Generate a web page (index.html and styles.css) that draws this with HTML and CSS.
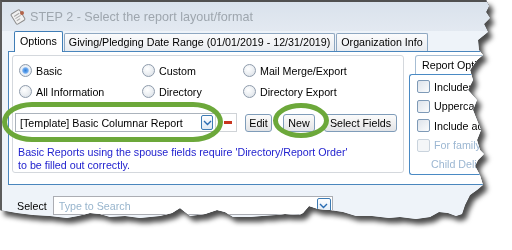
FILE: index.html
```html
<!DOCTYPE html>
<html lang="en-US">
<head>
  <meta charset="utf-8">
  <title>STEP 2 - Select the report layout/format</title>
  <link rel="stylesheet" href="styles.css">
</head>
<body>
  <div class="stage">
    <div class="torn">
      <div class="window">
        <div class="titlebar">
          <svg class="app-icon" width="16" height="16" viewBox="0 0 16 16">
            <g transform="rotate(-32 8 8)">
              <rect x="3" y="2" width="10" height="12" rx="1.5" fill="#f1f1f1" stroke="#8c8c8c"/>
              <path d="M5 5.5h6M5 8h6M5 10.5h4" stroke="#a8a8a8"/>
            </g>
            <circle cx="12" cy="4" r="2" fill="#b3644a"/>
          </svg>
          <span class="title">STEP 2 - Select the report layout/format</span>
        </div>

        <div class="client">
          <div class="tabs">
            <div class="tab active">Options</div>
            <div class="tab">Giving/Pledging Date Range (01/01/2019 - 12/31/2019)</div>
            <div class="tab">Organization Info</div>
          </div>

          <div class="tabpanel">
            <div class="group">
              <div class="radios">
                <label class="radio checked"><span class="circle"></span>Basic</label>
                <label class="radio"><span class="circle"></span>Custom</label>
                <label class="radio"><span class="circle"></span>Mail Merge/Export</label>
                <label class="radio"><span class="circle"></span>All Information</label>
                <label class="radio"><span class="circle"></span>Directory</label>
                <label class="radio"><span class="circle"></span>Directory Export</label>
              </div>

              <div class="layout-row">
                <div class="combo">
                  <span class="combo-text">[Template] Basic Columnar Report</span>
                  <span class="dd-btn">
                    <svg width="9" height="6" viewBox="0 0 9 6"><polyline points="1,1 4.5,4.5 8,1" fill="none" stroke="#2a6cb2" stroke-width="1.4"/></svg>
                  </span>
                </div>
                <div class="minus"><span></span></div>
                <button class="btn btn-edit">Edit</button>
                <button class="btn btn-new">New</button>
                <button class="btn btn-fields">Select Fields</button>
              </div>

              <p class="note">Basic Reports using the spouse fields require 'Directory/Report Order'<br>to be filled out correctly.</p>
            </div>

            <div class="report-opts">
              <div class="ro-tab">Report Options</div>
              <div class="ro-box">
                <label class="check"><span class="box"></span>Includes Inactive</label>
                <label class="check"><span class="box"></span>Uppercase</label>
                <label class="check"><span class="box"></span>Include address</label>
                <label class="check disabled"><span class="box"></span>For family</label>
                <div class="ro-sub disabled">Child Delimiter</div>
              </div>
            </div>
          </div>

          <div class="select-row">
            <span class="select-label">Select</span>
            <div class="search">
              <span class="placeholder">Type to Search</span>
              <span class="dd-btn">
                <svg width="9" height="6" viewBox="0 0 9 6"><polyline points="1,1 4.5,4.5 8,1" fill="none" stroke="#2a6cb2" stroke-width="1.4"/></svg>
              </span>
            </div>
          </div>
        </div>
      </div>
    </div>

    <div class="ring ring-combo"></div>
    <div class="ring ring-new"></div>
  </div>
</body>
</html>
```

FILE: styles.css
```css
body {
  margin: 0;
  background: #fff;
  font-family: "Liberation Sans", Arial, sans-serif;
  font-size: 10.7px;
  color: #000;
}

.stage {
  position: relative;
  width: 512px;
  height: 250px;
  overflow: hidden;
}

.torn {
  width: 500px;
  height: 226px;
  filter: drop-shadow(0 0 0.6px #000) drop-shadow(4px 5px 2.5px rgba(0, 0, 0, .7));
}

.window {
  box-sizing: border-box;
  height: 100%;
  display: flex;
  flex-direction: column;
  background: #edf2f8;
  border-top: 2px solid #505050;
  border-left: 2px solid #5c5c5c;
  clip-path: polygon(0 0, 486px 0, 489px 6px, 486px 12px, 490px 18px, 484px 24px, 488px 32px, 478px 40px,
    479px 50px, 483px 55px, 477px 60px, 470px 70px, 473px 80px, 468px 90px, 477px 100px, 473px 110px,
    477px 120px, 481px 130px, 477px 140px, 480px 150px, 484px 154px, 478px 160px, 475px 166px,
    480px 175px, 483px 185px, 477px 190px, 470px 195px, 465px 205px, 462px 214px, 456px 216px,
    448px 213px, 439px 212px, 430px 217px, 416px 219px, 400px 217px, 389px 218px, 372px 216px,
    356px 216px, 343px 212px, 330px 210px, 318px 209px, 309px 206px, 303px 213px, 299px 215px,
    285px 214px, 276px 215px, 262px 216px, 250px 217px, 233px 217px, 225px 212px, 217px 210px,
    205px 214px, 190px 216px, 185px 212px, 180px 208px, 172px 213px, 160px 216px, 140px 218px,
    125px 216px, 110px 217px, 100px 214px, 90px 213px, 78px 216px, 67px 218px, 50px 216px,
    33px 215px, 17px 213px, 0 210px);
}

/* title bar */
.titlebar {
  height: 29px;
  flex: none;
  display: flex;
  align-items: center;
  gap: 4px;
  padding-left: 8px;
  background: linear-gradient(#d9e2ec, #e3e9f1);
}

.app-icon {
  display: block;
  margin-top: 1px;
}

.title {
  font-size: 12.6px;
  color: #9ea6ae;
  margin-top: 1px;
}

/* client area */
.client {
  flex: 1;
  padding-left: 6px;
  background: #eef3f9;
}

.tabs {
  display: flex;
  align-items: flex-end;
  height: 20px;
  padding-left: 6px;
}

.tab {
  box-sizing: border-box;
  height: 18px;
  line-height: 16px;
  margin-right: 1px;
  padding: 0 4px;
  border: 1px solid #8ea7c1;
  border-bottom: none;
  border-radius: 2px 2px 0 0;
  background: linear-gradient(#fbfbfc, #e9ecf0);
  white-space: nowrap;
}

.tab.active {
  position: relative;
  z-index: 1;
  height: 21px;
  line-height: 19px;
  margin-bottom: -1px;
  padding: 0 5px;
  border-color: #3f7db6;
  background: #fff;
}

.tabpanel {
  display: flex;
  gap: 5px;
  padding: 3px 0 9px 3px;
  background: #fff;
  border: 1px solid #4a86bd;
  border-right: none;
}

/* options group */
.group {
  box-sizing: border-box;
  flex: none;
  width: 392px;
  height: 118px;
  padding: 4px 0 0 2px;
  border: 1px solid #d4d8dd;
  border-radius: 3px;
}

.radios {
  display: grid;
  grid-template-columns: 123px 101px auto;
  grid-auto-rows: 21px;
  margin-left: 4px;
}

.radio {
  display: flex;
  align-items: center;
  gap: 4px;
  white-space: nowrap;
}

.circle {
  box-sizing: border-box;
  width: 13px;
  height: 13px;
  border-radius: 50%;
  border: 1px solid #8e9bab;
  background: radial-gradient(circle at 40% 35%, #fff 0, #eef1f4 45%, #d6dce3 100%);
}

.radio.checked .circle {
  background: radial-gradient(circle, #2d7fd8 0, #6eaaf0 2.6px, #eef3f8 3.8px, #d8dee5 100%);
}

.layout-row {
  display: flex;
  align-items: center;
  margin-top: 11px;
  height: 19px;
}

.combo {
  box-sizing: border-box;
  width: 201px;
  height: 19px;
  display: flex;
  align-items: center;
  justify-content: space-between;
  padding: 0 2px 0 4px;
  border: 1px solid #abb3bc;
  background: #fff;
}

.dd-btn {
  box-sizing: border-box;
  width: 12px;
  height: 15px;
  display: flex;
  align-items: center;
  justify-content: center;
  border: 1px solid #3d7bb4;
  border-radius: 2px;
  background: linear-gradient(#fdfeff, #dfe9f4);
}

.minus {
  box-sizing: border-box;
  width: 22px;
  height: 19px;
  margin-left: -1px;
  display: flex;
  align-items: center;
  justify-content: center;
  border: 1px solid #cfd3d7;
}

.minus span {
  width: 8px;
  height: 3px;
  background: #c8361f;
  margin-left: 3px;
}

.btn {
  box-sizing: border-box;
  height: 18px;
  padding: 0;
  font-family: inherit;
  font-size: inherit;
  color: #000;
  border: 1px solid #7f9cb9;
  border-radius: 3px;
  background: linear-gradient(#fbfbfb, #f0f0f0 50%, #e2e4e7);
}

.btn-edit {
  width: 27px;
  margin-left: 8px;
}

.btn-new {
  width: 32px;
  margin-left: 11px;
}

.btn-fields {
  width: 73px;
  margin-left: 9px;
}

.note {
  margin: 14px 0 0 3px;
  line-height: 13px;
  color: #2323cf;
}

/* report options */
.report-opts {
  flex: 1;
}

.ro-tab {
  height: 18px;
  line-height: 18px;
  margin-left: 6px;
  padding-left: 6px;
  border: 1px solid #a6bdd3;
  border-bottom: none;
  border-radius: 3px 0 0 0;
  background: #fff;
  white-space: nowrap;
}

.ro-box {
  box-sizing: border-box;
  height: 101px;
  padding: 2px 0 0 7px;
  border: 1px solid #4a8ac4;
  border-right: none;
  border-radius: 3px 0 0 3px;
}

.check {
  display: flex;
  align-items: center;
  gap: 4px;
  height: 19.5px;
  white-space: nowrap;
}

.box {
  box-sizing: border-box;
  width: 13px;
  height: 13px;
  border: 1px solid #7e9ab7;
  border-radius: 2px;
  background: linear-gradient(135deg, #dde3ea, #fbfcfd);
}

.disabled {
  color: #9cb7d2;
}

.check.disabled .box {
  border-color: #c9d3dd;
  background: #f4f6f8;
}

.ro-sub {
  height: 19.5px;
  line-height: 19.5px;
  padding-left: 14px;
  white-space: nowrap;
}

/* bottom select */
.select-row {
  display: flex;
  align-items: center;
  gap: 6px;
  padding: 11px 0 0 9px;
}

.search {
  box-sizing: border-box;
  width: 280px;
  height: 19px;
  display: flex;
  align-items: center;
  justify-content: space-between;
  padding: 0 1px 0 5px;
  border: 1px solid #abadb3;
  background: #fff;
}

.search .dd-btn {
  width: 14px;
  height: 16px;
}

.placeholder {
  color: #98b5cd;
}

/* green highlight rings drawn over the screenshot */
.ring {
  position: absolute;
  box-sizing: border-box;
  border: 5px solid #6ca83a;
}

.ring-combo {
  left: 2px;
  top: 102px;
  width: 221px;
  height: 40px;
  border-radius: 30px / 20px;
}

.ring-new {
  left: 273px;
  top: 103px;
  width: 56px;
  height: 35px;
  border-radius: 50%;
}
```
